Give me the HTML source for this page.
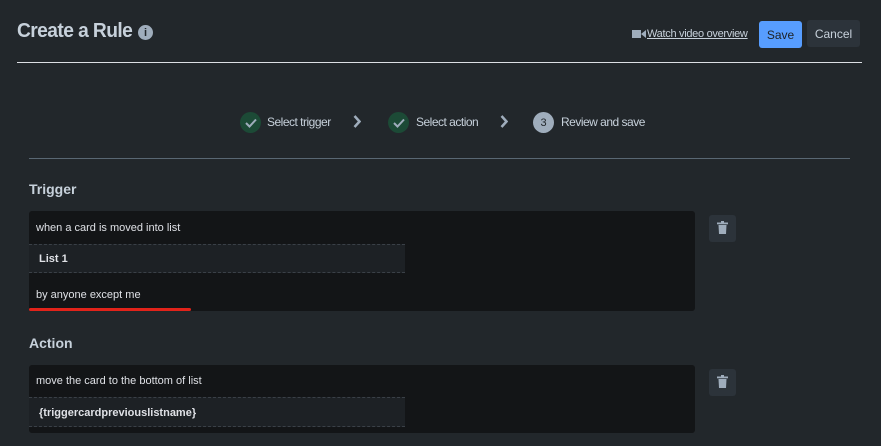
<!DOCTYPE html>
<html><head><style>
body{margin:0;width:881px;height:446px;background:#22272b;font-family:"Liberation Sans",sans-serif;color:#b6c2cf;position:relative;overflow:hidden}
.a{position:absolute}
.t{font-size:20px;color:#c7d1db;letter-spacing:-0.6px;font-weight:bold;transform:scaleX(0.96);transform-origin:left}
.btn{position:absolute;border-radius:3px;font-size:12px;display:flex;align-items:center;justify-content:center}
.step{font-size:12px;color:#c7d1db;letter-spacing:-0.5px}
.circ{position:absolute;width:21px;height:21px;border-radius:50%;display:flex;align-items:center;justify-content:center}
.box{position:absolute;background:#131517;border-radius:3px}
.txt{position:absolute;font-size:11px;color:#dfe1e6}
.sub{position:absolute;background:#1d2125;border-top:1px dashed #3a4047;border-bottom:1px dashed #3a4047}
.trash{position:absolute;width:27px;height:27px;background:#2c333a;border-radius:3px}
</style></head><body>
<div class="a t" style="left:17px;top:20px">Create a Rule</div>
<div class="circ" style="left:138px;top:25px;width:15px;height:15px;background:#9fadbc;color:#22272b;font-size:11px;font-weight:bold">i</div>
<svg class="a" style="left:632px;top:29px" width="14" height="10"><rect x="0" y="1" width="9" height="8" fill="#9fadbc"/><path d="M9 5 L14 1 L14 9Z" fill="#9fadbc"/></svg>
<div class="a" style="left:647px;top:28px;font-size:11px;color:#c7d1db;text-decoration:underline;letter-spacing:-0.3px">Watch video overview</div>
<div class="btn" style="left:759px;top:21px;width:43px;height:27px;background:#579dff;color:#1d2125">Save</div>
<div class="btn" style="left:807px;top:20px;width:53px;height:27px;background:#2c333a;color:#c7d1db">Cancel</div>
<div class="a" style="left:17px;top:62px;width:845px;height:1px;background:#dcdfe4"></div>

<div class="circ" style="left:240px;top:112px;background:#1c4a36"><svg width="12" height="10"><path d="M1 5 L4.5 8.5 L11 1.5" stroke="#9fadbc" stroke-width="2" fill="none"/></svg></div>
<div class="a step" style="left:267px;top:115px">Select trigger</div>
<svg class="a" style="left:353px;top:115px" width="8" height="13"><path d="M1.5 1 L6.5 6.5 L1.5 12" stroke="#9fadbc" stroke-width="2.5" fill="none"/></svg>
<div class="circ" style="left:388px;top:112px;background:#1c4a36"><svg width="12" height="10"><path d="M1 5 L4.5 8.5 L11 1.5" stroke="#9fadbc" stroke-width="2" fill="none"/></svg></div>
<div class="a step" style="left:416px;top:115px">Select action</div>
<svg class="a" style="left:500px;top:115px" width="8" height="13"><path d="M1.5 1 L6.5 6.5 L1.5 12" stroke="#9fadbc" stroke-width="2.5" fill="none"/></svg>
<div class="circ" style="left:533px;top:112px;background:#9fadbc;color:#22272b;font-size:11px">3</div>
<div class="a step" style="left:561px;top:115px">Review and save</div>
<div class="a" style="left:29px;top:158px;width:821px;height:1px;background:#596773"></div>

<div class="a" style="left:29px;top:181px;font-size:14px;font-weight:bold;color:#c7d1db">Trigger</div>
<div class="box" style="left:29px;top:211px;width:666px;height:100px"></div>
<div class="txt" style="left:36px;top:222px">when a card is moved into list</div>
<div class="sub" style="left:29px;top:244px;width:376px;height:27px"></div>
<div class="txt" style="left:39px;top:253px;font-weight:bold">List 1</div>
<div class="txt" style="left:36px;top:289px">by anyone except me</div>
<div class="a" style="left:29px;top:308px;width:162px;height:3px;background:#e2231a;border-radius:2px"></div>
<div class="trash" style="left:709px;top:215px"></div>
<svg class="a" style="left:716px;top:221px" width="13" height="14"><rect x="1" y="1.5" width="11" height="1.8" fill="#9fadbc"/><rect x="5" y="0" width="3" height="2" fill="#9fadbc"/><path d="M2.5 4 L10.5 4 L10 13 L3 13Z" fill="#9fadbc"/></svg>

<div class="a" style="left:29px;top:335px;font-size:14px;font-weight:bold;color:#c7d1db">Action</div>
<div class="box" style="left:29px;top:365px;width:666px;height:68px"></div>
<div class="txt" style="left:36px;top:375px">move the card to the bottom of list</div>
<div class="sub" style="left:29px;top:397px;width:376px;height:28px"></div>
<div class="txt" style="left:39px;top:407px;font-weight:bold">{triggercardpreviouslistname}</div>
<div class="trash" style="left:709px;top:369px"></div>
<svg class="a" style="left:716px;top:375px" width="13" height="14"><rect x="1" y="1.5" width="11" height="1.8" fill="#9fadbc"/><rect x="5" y="0" width="3" height="2" fill="#9fadbc"/><path d="M2.5 4 L10.5 4 L10 13 L3 13Z" fill="#9fadbc"/></svg>
</body></html>
